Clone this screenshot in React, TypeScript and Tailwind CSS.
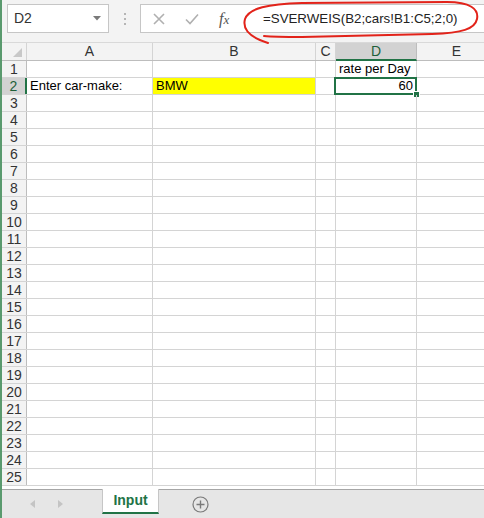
import React from 'react';

const COLS = [
  { key: 'A', w: 126 },
  { key: 'B', w: 163 },
  { key: 'C', w: 20 },
  { key: 'D', w: 81 },
  { key: 'E', w: 80 },
];

const ROWS = Array.from({ length: 25 }, (_, i) => i + 1);

const cellText = (r: number, c: string) => {
  if (r === 1 && c === 'D') return 'rate per Day';
  if (r === 2 && c === 'A') return 'Enter car-make:';
  if (r === 2 && c === 'B') return 'BMW';
  if (r === 2 && c === 'D') return '60';
  return '';
};

const TopBar: React.FC = () => (
  <div className="relative h-[43px] bg-[#f3f3f3] border-b border-[#d9d9d9] flex items-start">
    <div className="ml-[5px] mt-[4px] w-[102px] h-[29px] bg-white border border-[#c6c6c6] flex items-center justify-between pl-[6px] pr-[7px]">
      <span className="text-[14px] text-[#333]">D2</span>
      <svg width="8" height="5" viewBox="0 0 8 5"><path d="M0 0 L8 0 L4 4.5 Z" fill="#7a7a7a" /></svg>
    </div>
    <div className="w-[31px] h-[37px] flex flex-col items-center justify-center gap-[3px]">
      <span className="w-[2px] h-[2px] bg-[#b5b5b5]" />
      <span className="w-[2px] h-[2px] bg-[#b5b5b5]" />
      <span className="w-[2px] h-[2px] bg-[#b5b5b5]" />
    </div>
    <div className="mt-[4px] flex-1 h-[29px] bg-white border border-[#c6c6c6] border-r-0 flex items-center">
      <div className="w-[108px] flex items-center pl-[12px]">
        <svg width="12" height="12" viewBox="0 0 12 12">
          <path d="M1 1 L11 11 M11 1 L1 11" stroke="#b0b0b0" strokeWidth="1.6" />
        </svg>
        <svg width="14" height="12" viewBox="0 0 14 12" className="ml-[20px]">
          <path d="M1 6.5 L5 10.5 L13 1.5" stroke="#b0b0b0" strokeWidth="1.6" fill="none" />
        </svg>
        <span className="ml-[20px] text-[16px] leading-none italic text-[#555] font-['Liberation_Serif',serif]">
          f<span className="text-[13px]">x</span>
        </span>
      </div>
      <span className="ml-[14px] text-[13.3px] text-[#222]">=SVERWEIS(B2;cars!B1:C5;2;0)</span>
    </div>
    <svg className="absolute left-0 top-0 pointer-events-none" width="484" height="50" viewBox="0 0 484 50">
      <path
        d="M266 43 C250 38, 240 30, 243 19 C247 8, 266 4, 300 3 L445 2 C468 2, 477 9, 475 19 C473 29, 460 33, 430 34 L300 37 C285 37, 272 37, 262 36"
        stroke="#e2231a"
        strokeWidth="2"
        fill="none"
        strokeLinecap="round"
      />
    </svg>
  </div>
);

const Grid: React.FC = () => (
  <div className="bg-white">
    <div className="flex h-[18px] bg-[#f3f3f3] border-b border-[#bdbdbd]">
      <div className="w-[25px] shrink-0 border-r border-[#d4d4d4] relative">
        <svg className="absolute right-[4px] bottom-[3px]" width="9" height="9" viewBox="0 0 9 9">
          <path d="M9 0 L9 9 L0 9 Z" fill="#c8c8c8" />
        </svg>
      </div>
      {COLS.map((c) =>
        c.key === 'D' ? (
          <div
            key={c.key}
            style={{ width: c.w }}
            className="shrink-0 bg-[#d2d2d2] border-r border-[#bdbdbd] border-b-2 border-b-[#217346] -mb-[1px] flex items-center justify-center text-[14px] text-[#1e5f39]"
          >
            {c.key}
          </div>
        ) : (
          <div
            key={c.key}
            style={{ width: c.w }}
            className="shrink-0 border-r border-[#d4d4d4] flex items-center justify-center text-[14px] text-[#333]"
          >
            {c.key}
          </div>
        )
      )}
    </div>
    {ROWS.map((r) => (
      <div key={r} className="flex h-[17px] border-b border-[#d4d4d4]">
        <div
          className={
            r === 2
              ? 'w-[25px] shrink-0 bg-[#d2d2d2] border-r-2 border-[#217346] flex items-center justify-center text-[14px] text-[#1e5f39]'
              : 'w-[25px] shrink-0 bg-[#f3f3f3] border-r border-[#bdbdbd] flex items-center justify-center text-[14px] text-[#333]'
          }
        >
          {r}
        </div>
        {COLS.map((c) => {
          const t = cellText(r, c.key);
          const yellow = r === 2 && c.key === 'B';
          const active = r === 2 && c.key === 'D';
          return (
            <div
              key={c.key}
              style={{ width: c.w }}
              className={
                'relative shrink-0 border-r border-[#d4d4d4] flex items-end text-[13px] leading-[16px] text-black whitespace-nowrap ' +
                (yellow ? 'bg-[#ffff00] ' : '') +
                (active ? 'justify-end pr-[3px] ' : 'pl-[3px] ')
              }
            >
              {t}
              {active && (
                <>
                  <div className="absolute -left-[2px] -top-[1px] -right-[1px] -bottom-[1px] border-2 border-[#217346]" />
                  <div className="absolute -right-[4px] -bottom-[4px] w-[7px] h-[7px] bg-[#217346] border border-white" />
                </>
              )}
            </div>
          );
        })}
      </div>
    ))}
    <div className="h-[3px]" />
  </div>
);

const TabBar: React.FC = () => (
  <div className="h-[29px] bg-[#e6e6e6] border-t border-[#a6a6a6] flex items-start">
    <div className="w-[100px] h-[28px] flex items-center">
      <svg className="ml-[28px]" width="5" height="8" viewBox="0 0 5 8"><path d="M5 0 L0 4 L5 8 Z" fill="#c4c4c4" /></svg>
      <svg className="ml-[23px]" width="5" height="8" viewBox="0 0 5 8"><path d="M0 0 L5 4 L0 8 Z" fill="#c4c4c4" /></svg>
    </div>
    <div className="-mt-[1px] w-[57px] h-[25px] bg-white border-x border-[#c6c6c6] border-b-2 border-b-[#217346] flex items-center justify-center text-[14px] font-bold text-[#217346]">
      Input
    </div>
    <div className="ml-[33px] h-[28px] flex items-center">
      <svg width="17" height="17" viewBox="0 0 17 17">
        <circle cx="8.5" cy="8.5" r="7.5" stroke="#7a7a7a" strokeWidth="1.2" fill="none" />
        <path d="M8.5 4.5 V12.5 M4.5 8.5 H12.5" stroke="#7a7a7a" strokeWidth="1.4" />
      </svg>
    </div>
  </div>
);

const App: React.FC = () => {
  return (
    <div className="w-[484px] h-[518px] overflow-hidden border-l-2 border-[#5a9a6e] bg-white font-['Liberation_Sans',Arial,sans-serif]">
      <TopBar />
      <Grid />
      <TabBar />
    </div>
  );
};

export default App;
